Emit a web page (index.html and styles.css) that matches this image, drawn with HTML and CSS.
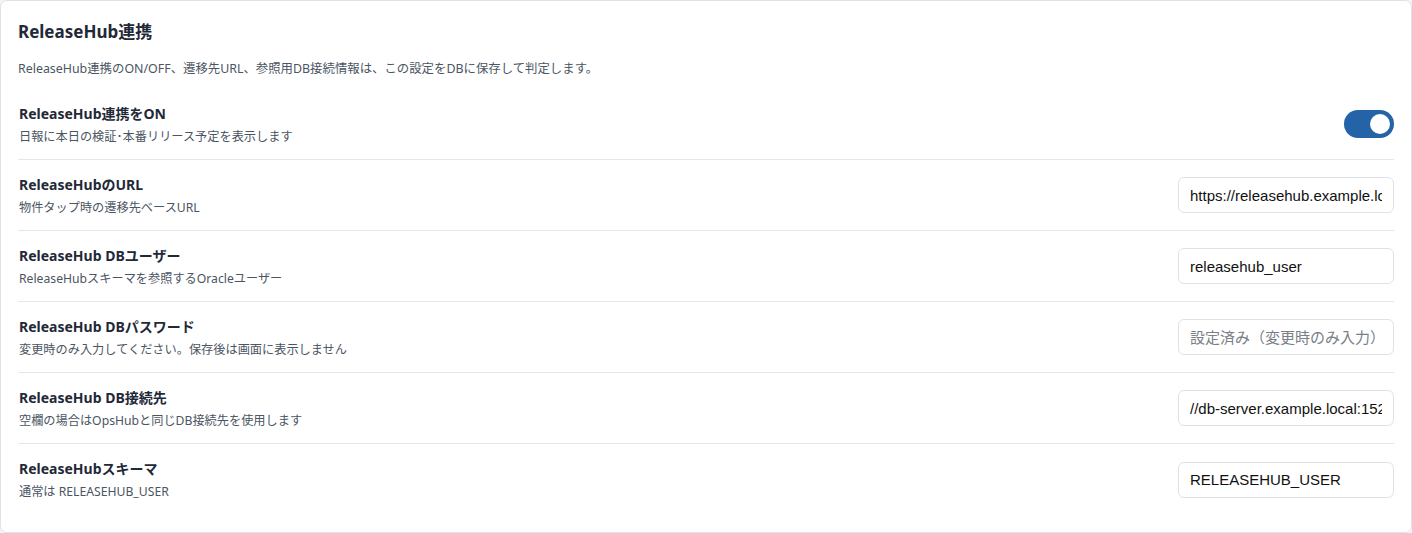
FILE: index.html
```html
<!DOCTYPE html>
<html lang="ja">
<head>
<meta charset="utf-8">
<title>ReleaseHub連携</title>
<link rel="stylesheet" href="styles.css">
</head>
<body>
<section class="card">
  <h2 class="card-title">ReleaseHub連携</h2>
  <p class="card-desc">ReleaseHub連携のON/OFF、遷移先URL、参照用DB接続情報は、この設定をDBに保存して判定します。</p>
  <div class="rows">
    <div class="row">
      <div class="info">
        <div class="label">ReleaseHub連携をON</div>
        <div class="sub">日報に本日の検証･本番リリース予定を表示します</div>
      </div>
      <label class="toggle"><input type="checkbox" checked><span class="track"><span class="knob"></span></span></label>
    </div>
    <div class="row">
      <div class="info">
        <div class="label">ReleaseHubのURL</div>
        <div class="sub">物件タップ時の遷移先ベースURL</div>
      </div>
      <input class="field" type="text" value="https://releasehub.example.local">
    </div>
    <div class="row">
      <div class="info">
        <div class="label">ReleaseHub DBユーザー</div>
        <div class="sub">ReleaseHubスキーマを参照するOracleユーザー</div>
      </div>
      <input class="field" type="text" value="releasehub_user">
    </div>
    <div class="row">
      <div class="info">
        <div class="label">ReleaseHub DBパスワード</div>
        <div class="sub">変更時のみ入力してください。保存後は画面に表示しません</div>
      </div>
      <input class="field" type="password" placeholder="設定済み（変更時のみ入力）">
    </div>
    <div class="row">
      <div class="info">
        <div class="label">ReleaseHub DB接続先</div>
        <div class="sub">空欄の場合はOpsHubと同じDB接続先を使用します</div>
      </div>
      <input class="field" type="text" value="//db-server.example.local:1521/ORCL">
    </div>
    <div class="row">
      <div class="info">
        <div class="label">ReleaseHubスキーマ</div>
        <div class="sub">通常は RELEASEHUB_USER</div>
      </div>
      <input class="field" type="text" value="RELEASEHUB_USER">
    </div>
  </div>
</section>
</body>
</html>
```

FILE: styles.css
```css
* { box-sizing: border-box; }
html, body {
  margin: 0;
  padding: 0;
  background: #f3f4f6;
}
body {
  font-family: "Noto Sans", "Noto Sans CJK JP", sans-serif;
  color: #1f2937;
}
.card {
  width: 1412px;
  height: 533px;
  background: #ffffff;
  border: 1px solid #dfe2e7;
  border-radius: 7px;
  padding: 18px 17px 16px 17px;
}
.card-title {
  margin: 0;
  font-size: 17px;
  font-weight: 700;
  line-height: 26px;
  color: #1f2937;
}
.card-desc {
  margin: 15px 0 0 0;
  font-size: 12.4px;
  line-height: 18px;
  color: #4b5563;
}
.rows {
  margin-top: 11px;
}
.row {
  display: flex;
  align-items: center;
  justify-content: space-between;
  height: 71px;
  border-bottom: 1px solid #e3e6eb;
}
.row:last-child { border-bottom: none; }
.info {
  display: flex;
  flex-direction: column;
  padding-left: 1px;
  padding-top: 2px;
}
.label {
  font-size: 14px;
  font-weight: 700;
  line-height: 20px;
  color: #1f2937;
}
.sub {
  margin-top: 3px;
  font-size: 12.2px;
  line-height: 20px;
  color: #4b5563;
}
.field {
  width: 216px;
  height: 36px;
  border: 1px solid #dfe2e7;
  border-radius: 6px;
  padding: 0 11px;
  font-family: "Liberation Sans", Arial, sans-serif;
  font-size: 15px;
  color: #111111;
  background: #ffffff;
  outline: none;
}
.field::placeholder {
  color: #7a7f87;
  font-family: "Noto Sans CJK JP", "Liberation Sans", sans-serif;
  font-size: 15px;
}
.toggle {
  display: inline-block;
  cursor: pointer;
}
.toggle input { display: none; }
.track {
  display: flex;
  align-items: center;
  justify-content: flex-end;
  width: 50px;
  height: 28px;
  border-radius: 14px;
  background: #2563a8;
  padding: 0 4px;
}
.knob {
  width: 20px;
  height: 20px;
  border-radius: 50%;
  background: #ffffff;
}
```
